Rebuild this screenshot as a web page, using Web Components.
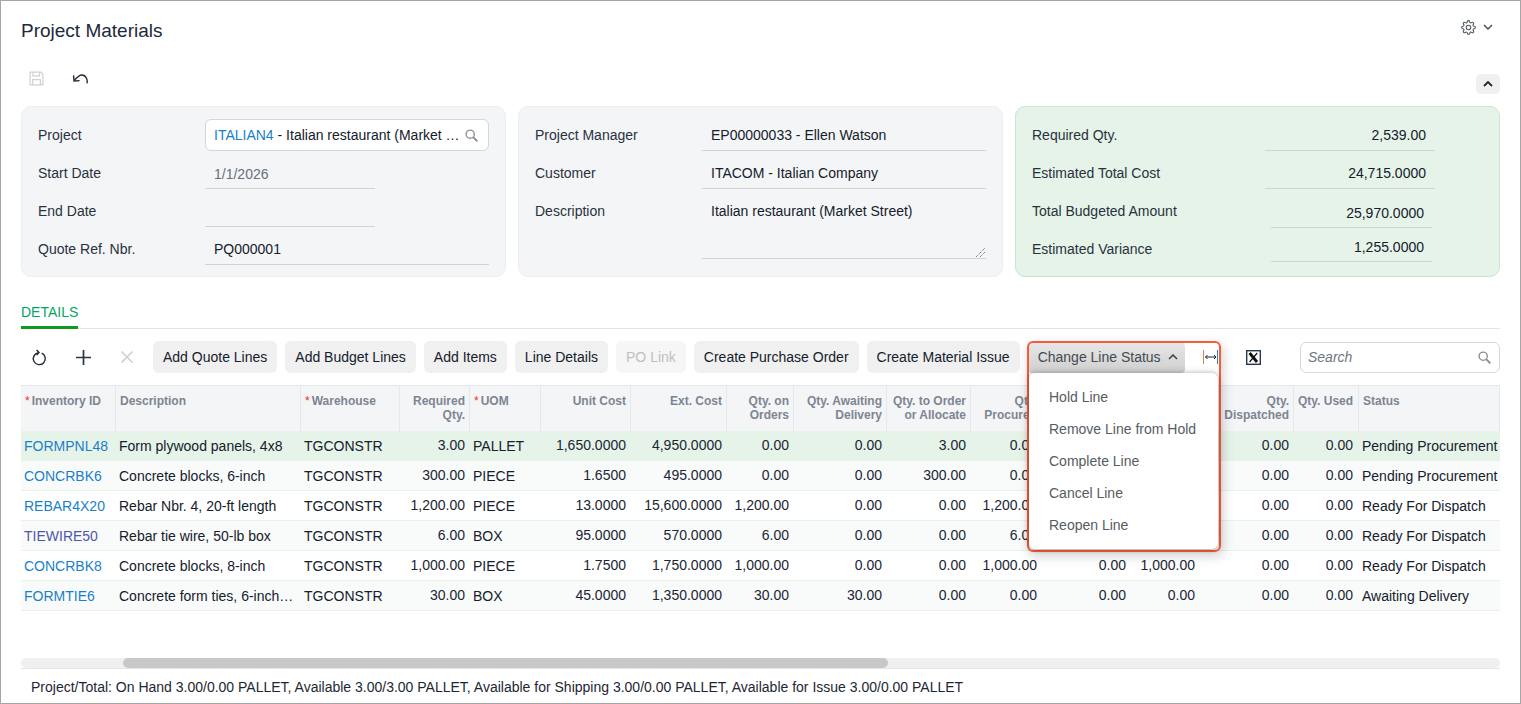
<!DOCTYPE html>
<html lang="en">
<head>
<meta charset="utf-8">
<title>Project Materials</title>
<style>
	html, body { margin: 0; padding: 0; background: #fff; }
	body { font: 14px "Liberation Sans", Arial, sans-serif; color: #1d2733; }
</style>
</head>
<body>

<pm-page>
	<pm-title slot="title">Project Materials</pm-title>
	<pm-actions slot="actions"></pm-actions>
	<div slot="cards" style="display:contents">
		<pm-card>
			<pm-field label="Project" style="--fw:284px"><pm-lookup></pm-lookup></pm-field>
			<pm-field label="Start Date" underline style="--fw:170px;--shift:1px;--vc:#66707c">1/1/2026</pm-field>
			<pm-field label="End Date" underline style="--fw:170px"></pm-field>
			<pm-field label="Quote Ref. Nbr." underline style="--fw:284px">PQ000001</pm-field>
		</pm-card>
		<pm-card>
			<pm-field label="Project Manager" underline style="--fw:284px">EP00000033 - Ellen Watson</pm-field>
			<pm-field label="Customer" underline style="--fw:284px">ITACOM - Italian Company</pm-field>
			<pm-field label="Description" underline area style="--fw:284px;--fh:64px">Italian restaurant (Market Street)</pm-field>
		</pm-card>
		<pm-card green>
			<pm-field label="Required Qty." underline right style="--fw:170px;--lw:233px;--pr:9px">2,539.00</pm-field>
			<pm-field label="Estimated Total Cost" underline right style="--fw:170px;--lw:233px;--pr:9px">24,715.0000</pm-field>
			<pm-field label="Total Budgeted Amount" underline right style="--fw:161px;--lw:239px;--pr:8px;--mt:5px;--fh:31px">25,970.0000</pm-field>
			<pm-field label="Estimated Variance" underline right style="--fw:161px;--lw:239px;--pr:8px;--mt:1px;--fh:31px">1,255.0000</pm-field>
		</pm-card>
	</div>
	<pm-tabs slot="tabs"></pm-tabs>
	<pm-toolbar slot="toolbar"></pm-toolbar>
	<pm-grid slot="grid"></pm-grid>
	<pm-scroll slot="scroll"></pm-scroll>
	<span slot="status">Project/Total: On Hand 3.00/0.00 PALLET, Available 3.00/3.00 PALLET, Available for Shipping 3.00/0.00 PALLET, Available for Issue 3.00/0.00 PALLET</span>
	<pm-menu slot="overlay"></pm-menu>
</pm-page>

<script>
/* ── Shared icons ── */
const ICON_SEARCH = `<svg width="13" height="13" viewBox="0 0 14 14" fill="none" stroke="#8b9097" stroke-width="1.5"><circle cx="5.6" cy="5.6" r="4.4"/><path d="M8.8 8.8l4.4 4.4" stroke-width="2"/></svg>`;

function shadow(el, html) {
	const root = el.attachShadow({ mode: "open" });
	root.innerHTML = html;
	return root;
}

/* ── Page frame: stacks the sections ── */
class PmPage extends HTMLElement {
	connectedCallback() {
		shadow(this, `
      <style>
        :host {
          display: flex; flex-direction: column; position: relative;
          box-sizing: border-box; width: 1521px; height: 704px;
          padding: 0 20px; border: 1px solid #a6a6a6; overflow: hidden;
          font: 14px "Liberation Sans", Arial, sans-serif; color: #1d2733;
        }
        .cards { display: grid; grid-template-columns: repeat(3, 485px); gap: 12px; height: 171px; }
        .status { flex: none; height: 35px; display: flex; align-items: center; padding: 2px 10px 0; border-top: 1px solid #e6e6e6; box-sizing: border-box; }
        .grid { flex: 1; min-height: 0; }
      </style>
      <slot name="title"></slot>
      <slot name="actions"></slot>
      <div class="cards"><slot name="cards"></slot></div>
      <slot name="tabs"></slot>
      <slot name="toolbar"></slot>
      <div class="grid"><slot name="grid"></slot></div>
      <slot name="scroll"></slot>
      <div class="status"><slot name="status"></slot></div>
      <slot name="overlay"></slot>
    `);
	}
}

/* ── Title row with the settings gear ── */
class PmTitle extends HTMLElement {
	connectedCallback() {
		shadow(this, `
      <style>
        :host { display: flex; align-items: center; justify-content: space-between; flex: none; height: 58px; }
        .t { font-size: 19px; color: #1d2a3a; padding-top: 2px; }
        .g { display: flex; align-items: center; gap: 7px; margin: -6px 7px 0 0; }
        svg { display: block; }
      </style>
      <span class="t"><slot></slot></span>
      <span class="g">
        <svg width="15" height="15" viewBox="0 0 24 24" fill="none" stroke="#4d545d" stroke-width="1.7"><circle cx="12" cy="12" r="3.6"/><path d="M19.4 15a1.65 1.65 0 0 0 .33 1.82l.06.06a2 2 0 0 1 0 2.83 2 2 0 0 1-2.83 0l-.06-.06a1.65 1.65 0 0 0-1.82-.33 1.65 1.65 0 0 0-1 1.51V21a2 2 0 0 1-2 2 2 2 0 0 1-2-2v-.09A1.65 1.65 0 0 0 9 19.4a1.65 1.65 0 0 0-1.82.33l-.06.06a2 2 0 0 1-2.83 0 2 2 0 0 1 0-2.83l.06-.06a1.65 1.65 0 0 0 .33-1.82 1.65 1.65 0 0 0-1.51-1H3a2 2 0 0 1-2-2 2 2 0 0 1 2-2h.09A1.65 1.65 0 0 0 4.6 9a1.65 1.65 0 0 0-.33-1.82l-.06-.06a2 2 0 0 1 0-2.83 2 2 0 0 1 2.83 0l.06.06a1.65 1.65 0 0 0 1.82.33H9a1.65 1.65 0 0 0 1-1.51V3a2 2 0 0 1 2-2 2 2 0 0 1 2 2v.09a1.65 1.65 0 0 0 1 1.51 1.65 1.65 0 0 0 1.82-.33l.06-.06a2 2 0 0 1 2.83 0 2 2 0 0 1 0 2.83l-.06.06a1.65 1.65 0 0 0-.33 1.82V9a1.65 1.65 0 0 0 1.51 1H21a2 2 0 0 1 2 2 2 2 0 0 1-2 2h-.09a1.65 1.65 0 0 0-1.51 1z"/></svg>
        <svg width="10" height="6" viewBox="0 0 10 6" fill="none" stroke="#4a5058" stroke-width="1.5"><path d="M1 1l4 4 4-4"/></svg>
      </span>
    `);
	}
}

/* ── Save / undo row with the collapse button ── */
class PmActions extends HTMLElement {
	connectedCallback() {
		shadow(this, `
      <style>
        :host { display: flex; justify-content: space-between; flex: none; height: 47px; box-sizing: border-box; }
        .l { display: flex; gap: 28px; padding: 12px 0 0 8px; height: 14px; }
        .c { display: flex; align-items: center; justify-content: center; width: 24px; height: 20px; margin-top: 15px; background: #f0f0f0; border-radius: 5px; }
        svg { display: block; }
      </style>
      <span class="l">
        <svg width="15" height="15" viewBox="0 0 15 15" fill="none" stroke="#cfd1d4" stroke-width="1.2"><path d="M1.1 1.1h10.6l2.2 2.2v10.6H1.1z"/><path d="M4 1.2v3.6h6.6V1.2M3.6 13.8V8.6h7.8v5.2"/></svg>
        <svg width="16" height="14" viewBox="0 0 16 14" fill="none" stroke="#1f2b3a" stroke-width="1.4"><path d="M15 12.4c.7-3-.6-8.4-5.2-8.4-2.4 0-4.6 2-7.7 5.4"/><path d="M1.6 4.4l.4 5.6 5.6-.4"/></svg>
      </span>
      <span class="c"><svg width="10" height="6" viewBox="0 0 10 6" fill="none" stroke="#1d2733" stroke-width="1.8"><path d="M1 5l4-4 4 4"/></svg></span>
    `);
	}
}

/* ── Summary card ── */
class PmCard extends HTMLElement {
	connectedCallback() {
		shadow(this, `
      <style>
        :host {
          display: block; box-sizing: border-box; padding: 9px 16px 8px;
          background: #f4f5f7; border: 1px solid #eceef1; border-radius: 10px;
        }
        :host([green]) { background: #e6f3e8; border-color: #c9e6d0; }
      </style>
      <slot></slot>
    `);
	}
}

/* ── Label + value row inside a card ── */
class PmField extends HTMLElement {
	connectedCallback() {
		shadow(this, `
      <style>
        :host { display: flex; height: 38px; }
        .l { flex: none; width: var(--lw, 167px); line-height: 38px; color: #28323e; white-space: nowrap; }
        .f {
          box-sizing: border-box; width: var(--fw); height: var(--fh, 32px); margin-top: var(--mt, 3px);
          padding: var(--shift, 0) var(--pr, 9px) 0 9px; line-height: 32px; color: var(--vc, #14202c); white-space: nowrap; position: relative;
        }
        :host([underline]) .f { border-bottom: 1px solid #cfd3d6; }
        :host([right]) .f { text-align: right; }
        :host([area]) .f { white-space: normal; }
        .grip { position: absolute; right: 1px; bottom: 1px; }
        :host(:not([area])) .grip { display: none; }
      </style>
      <span class="l">${this.getAttribute("label")}</span>
      <div class="f"><slot></slot>
        <svg class="grip" width="9" height="9" viewBox="0 0 9 9" stroke="#55595e" stroke-dasharray="1 1"><path d="M0 9L9 0M4 9l5-5"/></svg>
      </div>
    `);
	}
}

/* ── Project selector ── */
class PmLookup extends HTMLElement {
	connectedCallback() {
		shadow(this, `
      <style>
        :host {
          display: flex; align-items: center; justify-content: space-between; box-sizing: border-box; height: 32px; margin: 0 -9px;
          padding: 0 10px 0 8px; background: #fff; border: 1px solid #d3d6da; border-radius: 6px;
        }
        .t { white-space: nowrap; }
        a { color: #1a7fc9; text-decoration: none; }
        svg { display: block; flex: none; }
      </style>
      <span class="t"><a>ITALIAN4</a> - Italian restaurant (Market …</span>${ICON_SEARCH}
    `);
	}
}

/* ── Tab strip ── */
class PmTabs extends HTMLElement {
	connectedCallback() {
		shadow(this, `
      <style>
        :host { display: block; flex: none; height: 52px; box-sizing: border-box; border-bottom: 1px solid #e2e4e6; }
        .tab { display: inline-block; box-sizing: border-box; height: 52px; padding-top: 27px; line-height: 16px; color: #05a75e; border-bottom: 3px solid #0f9b22; }
      </style>
      <span class="tab">DETAILS</span>
    `);
	}
}

/* ── Grid toolbar ── */
class PmToolbar extends HTMLElement {
	connectedCallback() {
		const labels = ["Add Quote Lines", "Add Budget Lines", "Add Items", "Line Details", "PO Link", "Create Purchase Order", "Create Material Issue"];
		const btns = labels.map((t) => `<button class="${t === "PO Link" ? "off" : ""}">${t}</button>`).join("");
		shadow(this, `
      <style>
        :host { display: flex; align-items: center; flex: none; height: 56px; box-sizing: border-box; }
        .i { flex: none; width: 44px; height: 32px; display: flex; align-items: center; justify-content: center; }
        .lead { margin-left: -4px; }
        .btns { display: flex; gap: 8px; margin: 0 0 0 4px; }
        button {
          box-sizing: border-box; height: 32px; padding: 0 10px; border: 0; border-radius: 6px; background: #f0f0f0;
          font: inherit; color: #14202c; white-space: nowrap;
        }
        button.off { background: #f6f6f6; color: #bcc0c5; }
        button.open {
          display: flex; align-items: center; gap: 7px; padding-right: 7px; background: linear-gradient(#e8e8e8, #cfcfcf); color: #434a52;
          border-radius: 6px 6px 4px 4px;
        }
        .search {
          display: flex; align-items: center; justify-content: space-between; box-sizing: border-box; width: 200px; height: 31px; margin-left: auto;
          padding: 0 8px 0 7px; background: #fff; border: 1px solid #d6d8db; border-radius: 6px; font-style: italic; color: #6f7781;
        }
        svg { display: block; }
      </style>
      <span class="i lead"><svg width="16" height="17" viewBox="0 0 16 17" fill="none" stroke="#1f2b3a" stroke-width="1.4"><path d="M10.6 4.1a6 6 0 1 1-3.2-.4"/><path d="M5.6 1l2.4 2.6-2.4 2.4"/></svg></span>
      <span class="i"><svg width="15" height="15" viewBox="0 0 15 15" stroke="#2a3644" stroke-width="1.7"><path d="M7.5 0v15M0 7.5h15"/></svg></span>
      <span class="i"><svg width="12" height="12" viewBox="0 0 12 12" stroke="#c9ccd0" stroke-width="1.5"><path d="M.5.5l11 11M11.5.5l-11 11"/></svg></span>
      <span class="btns">${btns}<button class="open">Change Line Status <svg width="10" height="6" viewBox="0 0 10 6" fill="none" stroke="#3a4048" stroke-width="1.5"><path d="M1 5l4-4 4 4"/></svg></button></span>
      <span class="i fit" style="margin-left:3px"><svg width="16" height="14" viewBox="0 0 16 14" fill="none" stroke-width="1"><path d="M1.5 0v14" stroke="#c58a3c"/><path d="M15.5 0v14" stroke="#2f86c4"/><path d="M3.5 7h10.5" stroke="#1d2733"/><path d="M5.5 5l-2 2 2 2M12 5l2 2-2 2" stroke="#1d2733"/></svg></span>
      <span class="i"><svg width="15" height="15" viewBox="0 0 15 15" fill="none"><rect x=".7" y=".7" width="13.6" height="13.6" stroke="#24384f" stroke-width="1.4"/><path d="M3.6 3l7.4 9" stroke="#111" stroke-width="2.8"/><path d="M11.2 3l-7.6 9" stroke="#111" stroke-width="1.2"/></svg></span>
      <span class="search">Search${ICON_SEARCH}</span>
    `);
	}
}

/* ── Materials grid ── */
class PmGrid extends HTMLElement {
	connectedCallback() {
		const cols = [95, 185, 99, 70, 71, 90, 96, 67, 93, 84, 71, 89, 69, 94, 65, 141];
		const head = [
			["Inventory ID", 0, 1], ["Description", 0, 0], ["Warehouse", 0, 1], ["Required<br>Qty.", 1, 0], ["UOM", 0, 1],
			["Unit Cost", 1, 0], ["Ext. Cost", 1, 0], ["Qty. on<br>Orders", 1, 0], ["Qty. Awaiting<br>Delivery", 1, 0],
			["Qty. to Order<br>or Allocate", 1, 0], ["Qty.<br>Procured", 1, 0], ["", 1, 0], ["", 1, 0],
			["Qty.<br>Dispatched", 1, 0], ["Qty. Used", 1, 0], ["Status", 0, 0],
		];
		const rows = [
			["FORMPNL48", "Form plywood panels, 4x8", "TGCONSTR", "3.00", "PALLET", "1,650.0000", "4,950.0000", "0.00", "0.00", "3.00", "0.00", "", "", "0.00", "0.00", "Pending Procurement"],
			["CONCRBK6", "Concrete blocks, 6-inch", "TGCONSTR", "300.00", "PIECE", "1.6500", "495.0000", "0.00", "0.00", "300.00", "0.00", "", "", "0.00", "0.00", "Pending Procurement"],
			["REBAR4X20", "Rebar Nbr. 4, 20-ft length", "TGCONSTR", "1,200.00", "PIECE", "13.0000", "15,600.0000", "1,200.00", "0.00", "0.00", "1,200.00", "", "", "0.00", "0.00", "Ready For Dispatch"],
			["TIEWIRE50", "Rebar tie wire, 50-lb box", "TGCONSTR", "6.00", "BOX", "95.0000", "570.0000", "6.00", "0.00", "0.00", "6.00", "", "", "0.00", "0.00", "Ready For Dispatch"],
			["CONCRBK8", "Concrete blocks, 8-inch", "TGCONSTR", "1,000.00", "PIECE", "1.7500", "1,750.0000", "1,000.00", "0.00", "0.00", "1,000.00", "0.00", "1,000.00", "0.00", "0.00", "Ready For Dispatch"],
			["FORMTIE6", "Concrete form ties, 6-inch…", "TGCONSTR", "30.00", "BOX", "45.0000", "1,350.0000", "30.00", "30.00", "0.00", "0.00", "0.00", "0.00", "0.00", "0.00", "Awaiting Delivery"],
		];
		const leftCols = new Set([0, 1, 2, 4, 15]);
		const headHtml = head.map(([t, right, req], ci) =>
			`<div class="h ${right ? "r" : ""} ${ci === 14 ? "u" : ""}">${req ? '<i>*</i>' : ""}${t}</div>`).join("");
		const rowsHtml = rows.map((r, ri) => r.map((v, ci) => {
			let cls = leftCols.has(ci) ? "c" : "c n";
			if (ci === 14) cls += " u";
			if (ri === 0) cls += " sel";
			else if (ri % 2 === 1) cls += " alt";
			if (ci === 0) v = `<a class="${v === "TIEWIRE50" ? "seen" : ""}">${v}</a>`;
			return `<div class="${cls}">${v}</div>`;
		}).join("")).join("");
		shadow(this, `
      <style>
        :host { display: block; height: 100%; overflow: hidden; }
        .g { display: grid; grid-template-columns: ${cols.map((c) => c + "px").join(" ")}; grid-auto-rows: 30px; grid-template-rows: 46px; }
        .h {
          box-sizing: border-box; padding: 8px 4px 0 4px; background: #f4f5f7; border-top: 1px solid #e5e7ea; border-right: 1px solid #e5e7ea;
          font-size: 12px; font-weight: bold; line-height: 14px; color: #7d8592; white-space: nowrap; overflow: hidden;
        }
        .h.r { text-align: right; }
        .h.u { padding-right: 6px; }
        .h i { font-style: normal; color: #ef2b2b; margin-right: 2px; font-weight: normal; }
        .c {
          box-sizing: border-box; padding: 0 0 0 3px; line-height: 30px; border-bottom: 1px solid #e5f3e9;
          color: #14202c; white-space: nowrap; overflow: hidden;
        }
        .n { text-align: right; line-height: 28px; color: #1a2634; padding: 0 5px 0 0; }
        .n.u { padding-right: 6px; }
        .sel { background: #e6f3e8; border-bottom-color: #e6f3e8; }
        .alt { background: #f9fbfa; }
        a { color: #1a7fc9; text-decoration: none; }
        a.seen { color: #4f55ad; }
      </style>
      <div class="g">${headHtml}${rowsHtml}</div>
    `);
	}
}

/* ── Horizontal scrollbar ── */
class PmScroll extends HTMLElement {
	connectedCallback() {
		shadow(this, `
      <style>
        :host { display: block; flex: none; height: 10px; background: #f0f0f0; border-radius: 5px; }
        div { width: 765px; height: 10px; margin-left: 102px; background: #c8c8c8; border-radius: 5px; }
      </style>
      <div></div>
    `);
	}
}

/* ── Open "Change Line Status" menu, with the red call-out frame round it ── */
class PmMenu extends HTMLElement {
	connectedCallback() {
		const items = ["Hold Line", "Remove Line from Hold", "Complete Line", "Cancel Line", "Reopen Line"];
		shadow(this, `
      <style>
        :host { position: absolute; left: 1026px; top: 340px; width: 194px; height: 211px; box-sizing: border-box; border: 2px solid #fb5a38; border-radius: 6px; box-shadow: 2px 4px 12px rgba(0,0,0,.18); }
        .m {
          position: absolute; left: 0; right: 1px; top: 30px; bottom: 1px; box-sizing: border-box; padding: 8px 0; background: #fff;
          border-radius: 6px; box-shadow: 0 -1px 6px rgba(0,0,0,.15), 0 1px 4px rgba(0,0,0,.3);
        }
        .m div { height: 32px; line-height: 32px; padding-left: 20px; color: #555c64; white-space: nowrap; }
      </style>
      <div class="m">${items.map((t) => `<div>${t}</div>`).join("")}</div>
    `);
	}
}

customElements.define("pm-page", PmPage);
customElements.define("pm-title", PmTitle);
customElements.define("pm-actions", PmActions);
customElements.define("pm-card", PmCard);
customElements.define("pm-field", PmField);
customElements.define("pm-lookup", PmLookup);
customElements.define("pm-tabs", PmTabs);
customElements.define("pm-toolbar", PmToolbar);
customElements.define("pm-grid", PmGrid);
customElements.define("pm-scroll", PmScroll);
customElements.define("pm-menu", PmMenu);
</script>
</body>
</html>
